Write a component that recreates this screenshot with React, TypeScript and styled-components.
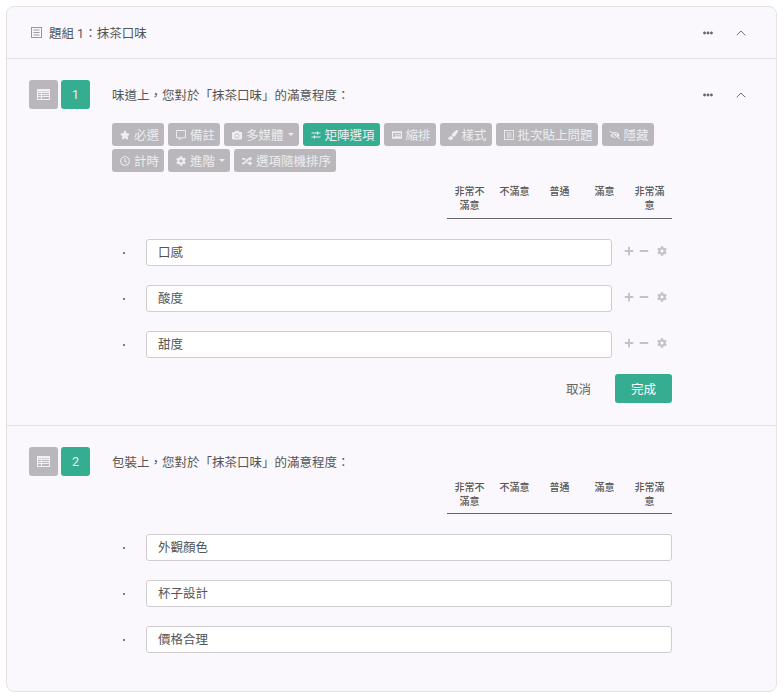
import React from 'react';
import styled, { createGlobalStyle } from 'styled-components';
import { ChevronUp } from 'lucide-react';
import {
  FaCamera,
  FaCog,
  FaEllipsisH,
  FaEyeSlash,
  FaMinus,
  FaPaintBrush,
  FaPlus,
  FaRandom,
  FaStar,
} from 'react-icons/fa';
import { FaRegClock, FaRegCommentAlt } from 'react-icons/fa';

const GlobalStyle = createGlobalStyle`
  html, body {
    margin: 0;
    background: #fff;
    font-family: Roboto, "Noto Sans CJK TC", sans-serif;
    color: #555;
  }
`;

const Page = styled.div`
  padding: 6px 7px 6px 6px;
`;

const Card = styled.div`
  height: 686px;
  box-sizing: border-box;
  border: 1px solid #e4e2e7;
  border-radius: 8px;
  background: #faf8fc;
`;

const GroupHeader = styled.div`
  height: 52px;
  box-sizing: border-box;
  border-bottom: 1px solid #e4e2e7;
  padding: 0 22px 0 24px;
  display: flex;
  align-items: center;
  gap: 7px;
  font-size: 12.5px;
`;

const GroupTitle = styled.span`
  flex: 1;
`;

const Actions = styled.div`
  display: flex;
  align-items: center;
  gap: 17px;
  margin-right: 5px;
  color: #666;
`;

const IconSlot = styled.span`
  width: 16px;
  display: flex;
  justify-content: center;
`;

const Question = styled.section<{ $last?: boolean }>`
  padding: 21px 22px ${(p) => (p.$last ? '38px' : '22px')} 22px;
  border-bottom: ${(p) => (p.$last ? 'none' : '1px solid #e4e2e7')};
`;

const QuestionHead = styled.div`
  display: flex;
  align-items: center;
  height: 29px;
`;

const Badge = styled.div<{ $green?: boolean }>`
  width: 29px;
  height: 29px;
  margin-right: 3px;
  border-radius: 3px;
  background: ${(p) => (p.$green ? '#35ad91' : '#b9b7bb')};
  color: #f1f0f2;
  font-size: 12.5px;
  display: flex;
  align-items: center;
  justify-content: center;
`;

const QuestionTitle = styled.div`
  flex: 1;
  margin-left: 19px;
  font-size: 12.5px;
`;

const Body = styled.div`
  margin-left: 83px;
  width: 560px;
`;

const Toolbar = styled.div`
  display: flex;
  flex-wrap: wrap;
  gap: 3px 4px;
  margin-top: 14px;
`;

const ToolButton = styled.div<{ $active?: boolean }>`
  height: 23px;
  box-sizing: border-box;
  padding: 0 5px 0 8px;
  border-radius: 3px;
  background: ${(p) => (p.$active ? '#35ad91' : '#b9b7bb')};
  color: #eeedf0;
  font-size: 12.5px;
  display: flex;
  align-items: center;
  gap: 4px;
  white-space: nowrap;

  svg {
    width: 10px;
    height: 10px;
    flex: none;
  }
`;

const Caret = styled.span`
  width: 0;
  height: 0;
  border-left: 3px solid transparent;
  border-right: 3px solid transparent;
  border-top: 3px solid #eeedf0;
`;

const ScaleHeader = styled.div<{ $tight?: boolean }>`
  margin: ${(p) => (p.$tight ? '4px' : '12px')} 0 20px 335px;
  width: 225px;
  height: ${(p) => (p.$tight ? '34px' : '35px')};
  box-sizing: border-box;
  border-bottom: 1px solid #666;
  display: grid;
  grid-template-columns: repeat(5, 45px);
`;

const ScaleLabel = styled.div`
  padding: 1px 4px 0;
  font-size: 10px;
  line-height: 14px;
  font-weight: 500;
  text-align: center;
  color: #555;
`;

const Rows = styled.div`
  display: flex;
  flex-direction: column;
  gap: 19px;
`;

const Row = styled.div`
  display: flex;
  align-items: center;
  height: 27px;
`;

const DotCell = styled.div`
  width: 34px;
  padding-left: 11px;
  box-sizing: border-box;
`;

const Dot = styled.div`
  width: 2px;
  height: 2px;
  border-radius: 50%;
  background: #555;
`;

const Field = styled.div`
  flex: 1;
  height: 27px;
  box-sizing: border-box;
  padding: 0 11px;
  border: 1px solid #cfcdd2;
  border-radius: 3px;
  background: #fff;
  font-size: 12.5px;
  line-height: 25px;
  color: #555;
`;

const RowTools = styled.div`
  width: 60px;
  box-sizing: border-box;
  padding: 0 0 3px 12px;
  display: flex;
  align-items: center;
  gap: 5px;
  color: #c4c2c6;

  svg {
    width: 10px;
    height: 10px;
  }

  svg:last-child {
    margin-left: 3px;
  }
`;

const Footer = styled.div`
  margin-top: 16px;
  display: flex;
  justify-content: flex-end;
  align-items: center;
  gap: 24px;
`;

const CancelButton = styled.div`
  font-size: 12.5px;
  color: #666;
`;

const DoneButton = styled.div`
  width: 57px;
  height: 29px;
  border-radius: 3px;
  background: #35ad91;
  color: #fff;
  font-size: 12.5px;
  display: flex;
  align-items: center;
  justify-content: center;
`;

const scale = ['非常不滿意', '不滿意', '普通', '滿意', '非常滿意'];

const ListIcon = () => (
  <svg width="11" height="11" viewBox="0 0 11 11" fill="none" stroke="#999" strokeWidth="1">
    <rect x="0.5" y="0.5" width="10" height="10" />
    <path d="M2.5 3h6M2.5 5.5h6M2.5 8h6" />
  </svg>
);

const GridIcon = () => (
  <svg width="13" height="11" viewBox="0 0 13 11" fill="none" stroke="currentColor" strokeWidth="1">
    <rect x="0.5" y="0.5" width="12" height="10" />
    <path d="M0.5 3.5h12M0.5 5.5h12M0.5 7.5h12M4.5 3.5v7" />
    <path d="M0.5 1.5h12" strokeWidth="2" />
  </svg>
);

const SlidersIcon = () => (
  <svg viewBox="0 0 10 10" fill="none" stroke="currentColor" strokeWidth="1">
    <path d="M0.5 3h9M0.5 7h9" />
    <path d="M6.5 1.5v3M3.5 5.5v3" strokeWidth="1.2" />
  </svg>
);

const IndentIcon = () => (
  <svg viewBox="0 0 12 10" fill="currentColor">
    <path d="M0 0.5h12v2H0zM0 2.5h1.4v5H0zM10.6 2.5H12v5h-1.4zM0 7.5h12v2H0z" />
    <path d="M3 4h7v1H3zM3 6h7v1H3z" />
  </svg>
);

const FormIcon = () => (
  <svg viewBox="0 0 10 10" fill="none" stroke="currentColor" strokeWidth="0.9">
    <rect x="0.5" y="0.5" width="9" height="9" />
    <path d="M2.5 3h5M2.5 5h5M2.5 7h5" />
  </svg>
);

const HeadActions = () => (
  <Actions>
    <IconSlot>
      <FaEllipsisH size={10} />
    </IconSlot>
    <IconSlot>
      <ChevronUp size={18} strokeWidth={1.4} />
    </IconSlot>
  </Actions>
);

const Scale = ({ tight }: { tight?: boolean }) => (
  <ScaleHeader $tight={tight}>
    {scale.map((label) => (
      <ScaleLabel key={label}>{label}</ScaleLabel>
    ))}
  </ScaleHeader>
);

const App = () => {
  return (
    <Page>
      <GlobalStyle />
      <Card>
        <GroupHeader>
          <ListIcon />
          <GroupTitle>題組 1：抹茶口味</GroupTitle>
          <HeadActions />
        </GroupHeader>

        <Question>
          <QuestionHead>
            <Badge>
              <GridIcon />
            </Badge>
            <Badge $green>1</Badge>
            <QuestionTitle>味道上，您對於「抹茶口味」的滿意程度：</QuestionTitle>
            <HeadActions />
          </QuestionHead>
          <Body>
            <Toolbar>
              <ToolButton><FaStar />必選</ToolButton>
              <ToolButton><FaRegCommentAlt />備註</ToolButton>
              <ToolButton><FaCamera />多媒體<Caret /></ToolButton>
              <ToolButton $active><SlidersIcon />矩陣選項</ToolButton>
              <ToolButton><IndentIcon />縮排</ToolButton>
              <ToolButton><FaPaintBrush />樣式</ToolButton>
              <ToolButton><FormIcon />批次貼上問題</ToolButton>
              <ToolButton><FaEyeSlash />隱藏</ToolButton>
              <ToolButton><FaRegClock />計時</ToolButton>
              <ToolButton><FaCog />進階<Caret /></ToolButton>
              <ToolButton><FaRandom />選項隨機排序</ToolButton>
            </Toolbar>
            <Scale />
            <Rows>
              {['口感', '酸度', '甜度'].map((name) => (
                <Row key={name}>
                  <DotCell><Dot /></DotCell>
                  <Field>{name}</Field>
                  <RowTools>
                    <FaPlus />
                    <FaMinus />
                    <FaCog />
                  </RowTools>
                </Row>
              ))}
            </Rows>
            <Footer>
              <CancelButton>取消</CancelButton>
              <DoneButton>完成</DoneButton>
            </Footer>
          </Body>
        </Question>

        <Question $last>
          <QuestionHead>
            <Badge>
              <GridIcon />
            </Badge>
            <Badge $green>2</Badge>
            <QuestionTitle>包裝上，您對於「抹茶口味」的滿意程度：</QuestionTitle>
          </QuestionHead>
          <Body>
            <Scale tight />
            <Rows>
              {['外觀顏色', '杯子設計', '價格合理'].map((name) => (
                <Row key={name}>
                  <DotCell><Dot /></DotCell>
                  <Field>{name}</Field>
                </Row>
              ))}
            </Rows>
          </Body>
        </Question>
      </Card>
    </Page>
  );
};

export default App;
